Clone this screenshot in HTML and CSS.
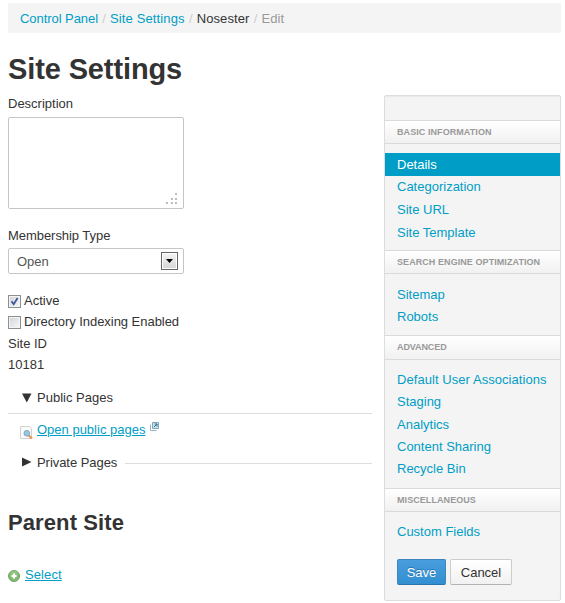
FILE: index.html
```html
<!DOCTYPE html>
<html lang="en">
<head>
<meta charset="utf-8">
<title>Site Settings</title>
<link rel="stylesheet" href="styles.css">
</head>
<body>
<nav class="breadcrumb"><a class="crumb-panel">Control Panel</a><i>/</i><a class="crumb-settings">Site Settings</a><i>/</i><span class="crumb-site">Nosester</span><i>/</i><span class="current">Edit</span></nav>
<h1>Site Settings</h1>
<div class="layout">
  <main>
    <div class="label">Description</div>
    <div class="textarea">
      <svg width="12" height="12" viewBox="0 0 12 12" fill="#bcbcbc"><path d="M9 0h2v2H9zM5 5h2v2H5zM9 5h2v2H9zM0 9h2v2H0zM5 9h2v2H5zM9 9h2v2H9z"/></svg>
    </div>
    <div class="label membership">Membership Type</div>
    <div class="select"><span>Open</span><b class="arrow"><svg width="7" height="4" viewBox="0 0 7 4"><path d="M0 0h7L3.5 4z"/></svg></b></div>
    <div class="options">
      <div class="row"><b class="check"><svg width="9" height="9" viewBox="0 0 9 9" fill="none" stroke="#3f5798" stroke-width="1.8"><path d="M1.5 4.2L3.7 7.2 7.6 1"/></svg></b><span>Active</span></div>
      <div class="row"><b class="check"></b><span class="indexing">Directory Indexing Enabled</span></div>
      <div class="row text">Site ID</div>
      <div class="row text">10181</div>
    </div>
    <div class="toggle public">
      <svg width="10" height="10" viewBox="0 0 10 10" fill="#333"><path d="M0 .5h9.500L4.750 9.500z"/></svg><span>Public Pages</span>
    </div>
    <div class="page-link">
      <svg class="search" width="14" height="14" viewBox="0 0 14 14"><path d="M.500.500h9l2 2v10h-11z" fill="#fafafa" stroke="#d2d2d2"/><path d="M8.800 9.500l3.200 3" stroke="#e79552" stroke-width="2.200"/><circle cx="6.800" cy="7.300" r="2.800" fill="#8dccec" stroke="#8aa0b3"/></svg>
      <a class="u open">Open public pages</a>
      <svg class="external" width="9" height="9" viewBox="0 0 9 9"><path d="M.500 2.500v6h6" fill="none" stroke="#94b5c5"/><path d="M2.500.500h6v6h-6z" fill="#c9e0ea" stroke="#7fa8ba"/><path d="M4 5l3-3M4.500 2H7v2.500" fill="none" stroke="#356f88"/></svg>
    </div>
    <div class="toggle private">
      <svg width="10" height="10" viewBox="0 0 10 10" fill="#333"><path d="M0 .5v9L9.500 5z"/></svg><span>Private Pages</span><hr>
    </div>
    <h2>Parent Site</h2>
    <div class="parent">
      <svg width="12" height="12" viewBox="0 0 12 12"><circle cx="6" cy="6" r="5.500" fill="#83b972" stroke="#75a568"/><circle cx="6" cy="4.500" r="3.800" fill="#a4cf94" opacity=".5"/><path d="M6 3.500v5M3.500 6h5" stroke="#fff" stroke-width="2"/></svg>
      <a class="u select-link">Select</a>
    </div>
  </main>
  <aside>
    <h3 class="basic">Basic Information</h3>
    <ul class="basic-list"><li class="active">Details</li><li>Categorization</li><li>Site URL</li><li>Site Template</li></ul>
    <h3>Search Engine Optimization</h3>
    <ul class="seo-list"><li>Sitemap</li><li>Robots</li></ul>
    <h3 class="advanced">Advanced</h3>
    <ul class="advanced-list"><li class="associations">Default User Associations</li><li>Staging</li><li>Analytics</li><li>Content Sharing</li><li>Recycle Bin</li></ul>
    <h3>Miscellaneous</h3>
    <ul class="misc-list"><li>Custom Fields</li></ul>
    <div class="buttons"><button class="save">Save</button><button>Cancel</button></div>
  </aside>
</div>
</body>
</html>
```
FILE: styles.css
```css
* { box-sizing: border-box; }
body { margin: 0; padding: 3px 4px 0 8px; height: 603px; overflow: hidden; background: #fff; color: #333; font: 13px/20px "Liberation Sans", Arial, sans-serif; }
a { color: #009ec6; }
.breadcrumb { height: 30px; padding: 1px 12px 0; display: flex; align-items: center; background: #f4f4f4; border-radius: 2px; white-space: nowrap; }
.breadcrumb i { font-style: normal; color: #ccc; width: 12px; text-align: center; }
.breadcrumb .current { color: #999; letter-spacing: .1px; }
.crumb-panel { letter-spacing: -.06px; }
.crumb-settings { letter-spacing: .13px; }
.crumb-site { letter-spacing: .1px; }
h1 { margin: 15px 0 0; height: 40px; font-size: 29px; line-height: 42px; letter-spacing: -.12px; }
.layout { display: flex; justify-content: space-between; margin-top: 7px; }
main { width: 364px; }
.label { height: 21px; line-height: 17px; }
.textarea { width: 176px; height: 92px; border: 1px solid #c5c5c5; border-radius: 2px; margin-top: 1px; display: flex; justify-content: flex-end; align-items: flex-end; padding: 0 5px 3px 0; }
.membership { margin-top: 18px; letter-spacing: -.05px; }
.select { width: 176px; height: 26px; border: 1px solid #c5c5c5; border-radius: 2px; display: flex; align-items: center; justify-content: space-between; padding: 0 5px 0 8px; color: #555; }
.select span { padding-top: 2px; }
.arrow { width: 17px; height: 18px; border: 1px solid #666; background: linear-gradient(#f5f5f5, #d5d5d5); box-shadow: inset 0 0 0 1px #fff; display: flex; align-items: center; justify-content: center; }
.options { margin-top: 16px; height: 85px; }
.row { height: 21.1px; display: flex; align-items: center; gap: 3px; }
.text { padding-top: 2px; }
.indexing { letter-spacing: -.04px; }
.check { width: 13px; height: 13px; border: 1px solid #8e8f8f; background: linear-gradient(135deg, #d0d3d8, #f8f8f8); box-shadow: inset 0 0 0 1px #f4f4f4; margin-top: 2px; display: flex; align-items: center; justify-content: center; }
.toggle { display: flex; align-items: center; gap: 5px; padding-left: 14px; }
.public { height: 33px; margin-top: 6px; padding-top: 1px; border-bottom: 1px solid #ddd; }
.page-link { display: flex; height: 32px; align-items: center; padding-left: 12px; }
.search { margin: 6px 3px 0 0; }
.u { text-decoration: underline; }
.external { margin: -8px 0 0 5px; }
.private { height: 32px; }
.private span { letter-spacing: -.05px; padding-top: 1px; }
hr { flex: 1; border: 0; border-top: 1px solid #ddd; margin: 2px 0 0 3px; }
h2 { margin: 28px 0 0; height: 32px; font-size: 22px; line-height: 34px; letter-spacing: .1px; }
.parent { margin-top: 26px; display: flex; align-items: center; height: 20px; gap: 5px; }
.parent svg { margin-top: 4px; }
.select-link { padding-top: 2px; letter-spacing: .1px; }
aside { width: 177px; height: 506px; border: 1px solid #ddd; border-radius: 2px; background: #f4f4f4; box-shadow: inset 0 1px 1px #e9e9e9; }
h3 { margin: 0; height: 24px; padding-left: 12px; border: solid #dadada; border-width: 1px 0; background: linear-gradient(#fff, #f1f1f1); color: #999; font-size: 9px; line-height: 22px; letter-spacing: .07px; text-transform: uppercase; white-space: nowrap; }
.basic { margin-top: 24px; }
.advanced { height: 25px; letter-spacing: -.1px; }
ul { list-style: none; margin: 0; padding: 9px 0 0; }
li { height: 22.3px; line-height: 23px; padding-left: 12px; color: #009ec6; white-space: nowrap; }
.associations { letter-spacing: .06px; }
.active { height: 23px; background: #009ec6; color: #fff; }
.basic-list { height: 106px; }
.active + li { line-height: 21px; }
.seo-list { height: 61px; }
.advanced-list { height: 128px; padding-top: 8px; }
.misc-list { height: 47px; padding-top: 8px; }
.buttons { display: flex; gap: 4px; padding-left: 12px; }
button { height: 26px; width: 62px; padding: 1px 0 0; border: 1px solid #ccc; border-bottom-color: #b3b3b3; border-radius: 2px; background: linear-gradient(#fff, #f1f1f1); font: inherit; color: #333; }
.save { width: 49px; border-color: #3c86bd #3c86bd #2876ad; background: linear-gradient(#489ddd, #338fd1); color: #fff; text-shadow: 0 -1px 0 #2876ad; }
```
